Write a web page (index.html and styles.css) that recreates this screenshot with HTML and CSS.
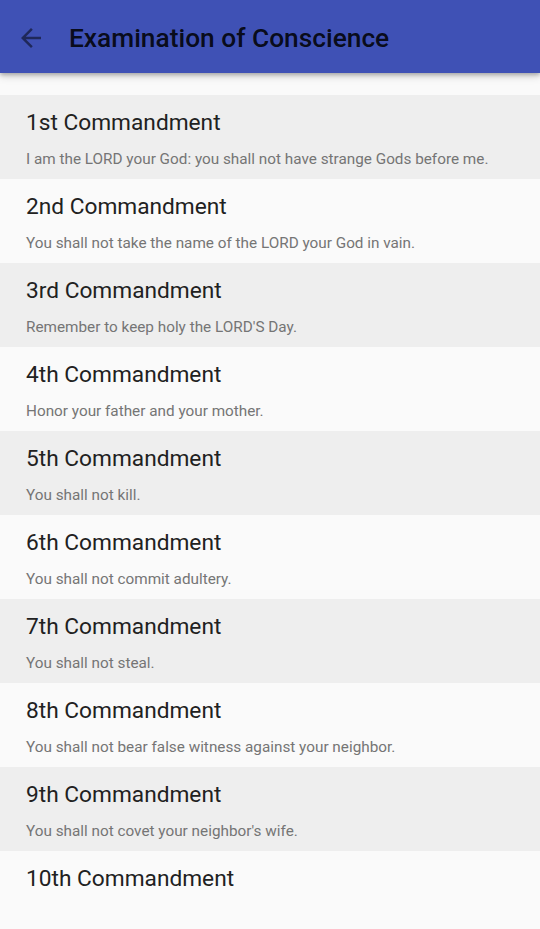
FILE: index.html
```html
<!DOCTYPE html>
<html>
<head>
<meta charset="utf-8">
<link rel="stylesheet" href="styles.css">
</head>
<body>
<header class="appbar">
  <svg class="back" viewBox="0 0 24 24" width="30" height="30"><path d="M20 11H7.83l5.59-5.59L12 4l-8 8 8 8 1.41-1.41L7.83 13H20v-2z"/></svg>
  <h1 class="title">Examination of Conscience</h1>
</header>
<main class="list">
  <div class="item odd"><div class="name">1st Commandment</div><div class="desc">I am the LORD your God: you shall not have strange Gods before me.</div></div>
  <div class="item"><div class="name">2nd Commandment</div><div class="desc">You shall not take the name of the LORD your God in vain.</div></div>
  <div class="item odd"><div class="name">3rd Commandment</div><div class="desc">Remember to keep holy the LORD'S Day.</div></div>
  <div class="item"><div class="name">4th Commandment</div><div class="desc">Honor your father and your mother.</div></div>
  <div class="item odd"><div class="name">5th Commandment</div><div class="desc">You shall not kill.</div></div>
  <div class="item"><div class="name">6th Commandment</div><div class="desc">You shall not commit adultery.</div></div>
  <div class="item odd"><div class="name">7th Commandment</div><div class="desc">You shall not steal.</div></div>
  <div class="item"><div class="name">8th Commandment</div><div class="desc">You shall not bear false witness against your neighbor.</div></div>
  <div class="item odd"><div class="name">9th Commandment</div><div class="desc">You shall not covet your neighbor's wife.</div></div>
  <div class="item"><div class="name">10th Commandment</div></div>
</main>
</body>
</html>
```
FILE: styles.css
```css
html, body {
  margin: 0;
  padding: 0;
  background: #fafafa;
  font-family: Roboto, "Noto Sans", sans-serif;
  overflow: hidden;
  height: 929px;
}
.appbar {
  position: relative;
  z-index: 2;
  height: 73px;
  box-sizing: border-box;
  padding-top: 2px;
  background: #3f51b5;
  display: flex;
  align-items: center;
  box-shadow: 0 2px 4px rgba(0,0,0,0.25), 0 4px 8px rgba(0,0,0,0.12);
}
.back {
  width: 30px;
  height: 30px;
  margin-left: 16px;
  margin-right: 23px;
  fill: rgba(0,0,0,0.5);
}
.title {
  margin: 0;
  font-size: 26.3px;
  font-weight: 500;
  color: rgba(0,0,0,0.87);
  letter-spacing: 0;
}
.list {
  padding-top: 22px;
}
.item {
  height: 84px;
  box-sizing: border-box;
  padding: 15px 26px 0;
  background: #fafafa;
}
.item.odd {
  background: #eeeeee;
}
.name {
  font-size: 22.7px;
  line-height: 26px;
  color: #212121;
}
.desc {
  margin-top: 13px;
  font-size: 15.3px;
  line-height: 20px;
  color: #757575;
}
```
